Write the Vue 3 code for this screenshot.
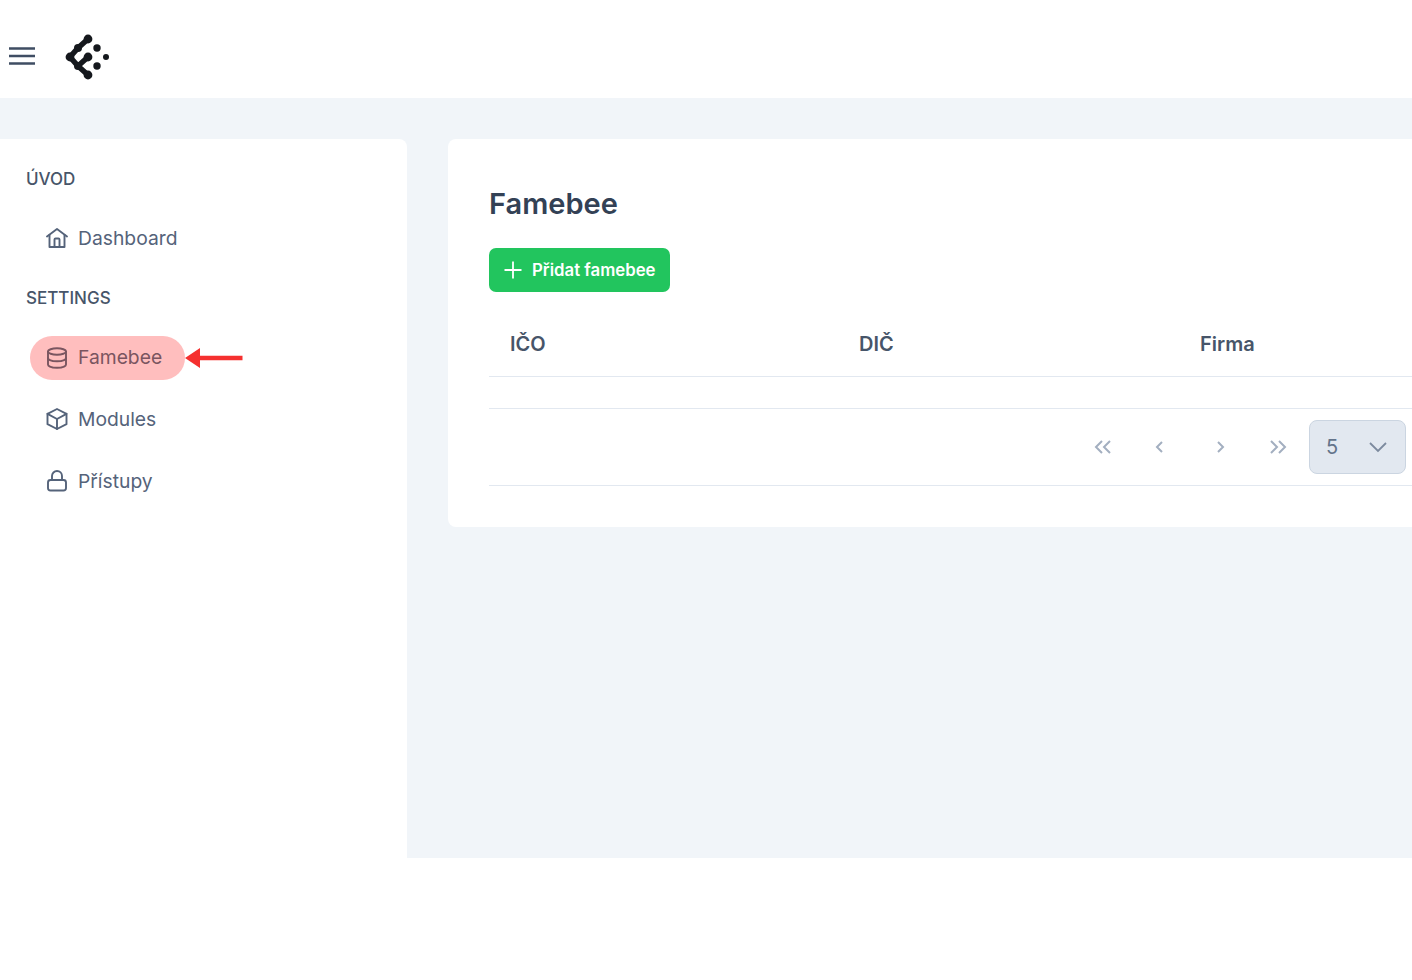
<script setup>
const groups = [
  { title: 'ÚVOD', items: [{ label: 'Dashboard', icon: 'home' }] },
  { title: 'SETTINGS', items: [
    { label: 'Famebee', icon: 'db', active: true },
    { label: 'Modules', icon: 'box' },
    { label: 'Přístupy', icon: 'lock' }
  ] }
]
const columns = ['IČO', 'DIČ', 'Firma']
</script>

<template>
  <div class="page">
    <header class="top">
      <svg class="burger" width="28" height="20" viewBox="0 0 28 20" fill="none" stroke="#3f4d63" stroke-width="2.6">
        <path d="M1 2.500h26M1 10h26M1 17.500h26" />
      </svg>
      <svg class="logo" width="46" height="46" viewBox="0 0 46 46" fill="#15181d" stroke="#15181d">
        <path d="M23 5 13 14 5 23l8 9 10 9M13 32l10-9" fill="none" stroke-width="5.400" />
        <circle cx="23" cy="5" r="4.400" stroke="none" />
        <circle cx="13" cy="14" r="4" stroke="none" />
        <circle cx="5" cy="23" r="4.400" stroke="none" />
        <circle cx="13" cy="32" r="4" stroke="none" />
        <circle cx="23" cy="41" r="4.400" stroke="none" />
        <circle cx="23" cy="23" r="4.400" stroke="none" />
        <circle cx="32" cy="14" r="3.700" stroke="none" />
        <circle cx="32" cy="32" r="3.700" stroke="none" />
        <circle cx="41" cy="23" r="3" stroke="none" />
      </svg>
    </header>

    <div class="body">
      <aside class="side">
        <section v-for="g in groups" :key="g.title" class="group">
          <h3 class="group-title">{{ g.title }}</h3>
          <a v-for="it in g.items" :key="it.label" class="item" :class="{ active: it.active }">
            <svg class="ico" width="24" height="24" viewBox="0 0 24 24" fill="none" stroke="currentColor" stroke-width="1.900" stroke-linecap="round" stroke-linejoin="round">
              <template v-if="it.icon === 'home'">
                <path d="M2 10.500 12 3l10 7.500" />
                <path d="M4.500 9v12h15V9" />
                <path d="M9.500 21v-7.500a1 1 0 0 1 1-1h3a1 1 0 0 1 1 1V21" />
              </template>
              <template v-else-if="it.icon === 'db'">
                <ellipse cx="12" cy="5.500" rx="9" ry="3.200" />
                <path d="M3 5.500v13c0 1.800 4 3.200 9 3.200s9-1.400 9-3.200v-13" />
                <path d="M3 12c0 1.800 4 3.200 9 3.200s9-1.400 9-3.200" />
              </template>
              <template v-else-if="it.icon === 'box'">
                <path d="M12 2 21.500 6.800v10.400L12 22l-9.500-4.800V6.800z" />
                <path d="M2.500 6.800 12 12l9.500-5.200M12 12v10" />
              </template>
              <template v-else>
                <rect x="3" y="11" width="18" height="10.500" rx="2.500" />
                <path d="M7 11V7a5 5 0 0 1 10 0v4" />
              </template>
            </svg>
            <span>{{ it.label }}</span>
            <svg v-if="it.active" class="arrow" width="60" height="22" viewBox="0 0 60 22">
              <path d="M0 11 15 1v7.700h42.500v4.600H15V21z" fill="#f5302f" />
            </svg>
          </a>
        </section>
      </aside>

      <main class="card">
        <h1 class="title">Famebee</h1>
        <button class="add" type="button">
          <svg width="20" height="20" viewBox="0 0 20 20" fill="none" stroke="#fff" stroke-width="1.800">
            <path d="M10 1.500v17M1.500 10h17" />
          </svg>
          <span>Přidat famebee</span>
        </button>
        <div class="thead">
          <div v-for="c in columns" :key="c" class="th">{{ c }}</div>
        </div>
        <div class="empty"></div>
        <div class="pager">
          <svg class="pg first" width="20" height="16" viewBox="0 0 20 16" fill="none" stroke="#a3afc0" stroke-width="2">
            <path d="M9 2 3 8l6 6M17 2l-6 6 6 6" />
          </svg>
          <svg class="pg prev" width="10" height="16" viewBox="0 0 10 16" fill="none" stroke="#a3afc0" stroke-width="2">
            <path d="M8 3 3 8l5 5" />
          </svg>
          <svg class="pg next" width="10" height="16" viewBox="0 0 10 16" fill="none" stroke="#a3afc0" stroke-width="2">
            <path d="M2 3l5 5-5 5" />
          </svg>
          <svg class="pg last" width="20" height="16" viewBox="0 0 20 16" fill="none" stroke="#a3afc0" stroke-width="2">
            <path d="M3 2l6 6-6 6M11 2l6 6-6 6" />
          </svg>
          <div class="select">
            <span>5</span>
            <svg width="20" height="12" viewBox="0 0 20 12" fill="none" stroke="#7c8a9e" stroke-width="1.800">
              <path d="M2 2l8 8 8-8" />
            </svg>
          </div>
        </div>
      </main>
    </div>
  </div>
</template>

<style>
html, body { margin: 0; background: #fff; overflow: hidden; }
</style>

<style scoped>
.page {
  width: 1412px;
  height: 980px;
  overflow: hidden;
  background: #fff;
  font-family: Inter, "Noto Sans", "Liberation Sans", sans-serif;
  color: #475569;
}
.top {
  height: 98px;
  display: flex;
  align-items: center;
  padding-left: 8px;
  gap: 29px;
  box-sizing: border-box;
}
.burger { margin-top: 14px; }
.logo { margin-top: 16px; }
.body {
  height: 760px;
  background: #f1f5f9;
  padding-top: 41px;
  box-sizing: border-box;
  display: flex;
  align-items: flex-start;
}
.side {
  width: 407px;
  flex: none;
  height: 719px;
  background: #fff;
  border-top-right-radius: 8px;
  box-sizing: border-box;
  padding: 29px 0 0 26px;
}
.group-title {
  margin: 0;
  font-size: 17px;
  line-height: 22px;
  font-weight: 500;
  color: #475569;
}
.group { margin-bottom: 27px; }
.group::after { content: ""; display: block; clear: both; }
.item {
  position: relative;
  display: inline-flex;
  align-items: center;
  gap: 9px;
  height: 44px;
  padding: 0 23px 0 15px;
  margin: 26px 0 0 4px;
  border-radius: 22px;
  font-size: 19.300px;
  color: #55637a;
  float: left;
  clear: both;
}
.group + .group .item:first-of-type { margin-top: 27px; }
.item + .item { margin-top: 17px; }
.item + .item + .item { margin-top: 18px; }
.active {
  background: #ffbebe;
  color: #7a5560;
}
.active span { margin-bottom: 2px; }
.ico { flex: none; }
.arrow { position: absolute; left: 100%; top: 11px; }
.card {
  margin-left: 41px;
  width: 1000px;
  flex: none;
  height: 388px;
  background: #fff;
  border-radius: 8px;
  box-sizing: border-box;
  padding: 46px 0 0 41px;
}
.title {
  margin: 0;
  font-size: 29px;
  line-height: 38px;
  font-weight: 600;
  color: #334155;
}
.add {
  margin-top: 25px;
  height: 44px;
  width: 181px;
  border: 0;
  padding: 0 0 0 14px;
  border-radius: 7px;
  background: #22c55e;
  color: #fff;
  font: 600 16.800px Inter, "Noto Sans", sans-serif;
  display: flex;
  align-items: center;
  gap: 9px;
}
.thead {
  display: flex;
  height: 85px;
  border-bottom: 1px solid #e2e8f0;
  box-sizing: border-box;
}
.th {
  width: 341px;
  flex: none;
  box-sizing: border-box;
  padding: 40px 0 0 21px;
  font-size: 20px;
  line-height: 24px;
  font-weight: 600;
  color: #475569;
}
.th:first-child { width: 349px; }
.empty {
  height: 31px;
  border-bottom: 1px solid #e2e8f0;
}
.pager {
  height: 76px;
  border-bottom: 1px solid #e2e8f0;
  display: flex;
  align-items: center;
  position: relative;
}
.pg { flex: none; }
.first { margin-left: 604px; }
.prev { margin-left: 41px; }
.next { margin-left: 52px; }
.last { margin-left: 42px; }
.select {
  margin-left: 21px;
  width: 97px;
  height: 54px;
  box-sizing: border-box;
  background: #e2e8f0;
  border: 1px solid #cbd5e1;
  border-radius: 8px;
  display: flex;
  align-items: center;
  justify-content: space-between;
  padding: 0 17px 0 16px;
  font-size: 20px;
  color: #64748b;
}
</style>
